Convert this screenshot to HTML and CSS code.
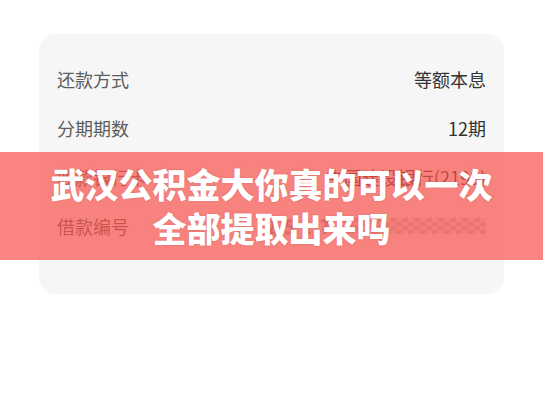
FILE: index.html
```html
<!DOCTYPE html>
<html lang="zh-CN">
<head>
    <meta charset="UTF-8">
    <meta name="viewport" content="width=device-width, initial-scale=1.0">
    <title>武汉公积金大你真的可以一次全部提取出来吗</title>
    <link rel="stylesheet" href="styles.css">
</head>
<body>
    <div class="page">
        <div class="card">
            <div class="row">
                <span class="label">还款方式</span>
                <span class="value">等额本息</span>
            </div>
            <div class="row">
                <span class="label">分期期数</span>
                <span class="value">12期</span>
            </div>
            <div class="row">
                <span class="label">收款银行卡</span>
                <span class="value">中国建设银行(2199)</span>
            </div>
            <div class="row">
                <span class="label">借款编号</span>
                <span class="value">
                    <span class="num">2 5 1 7</span><span class="mosaic"></span>
                </span>
            </div>
        </div>

        <div class="banner">
            <h1>武汉公积金大你真的可以一次<br>全部提取出来吗</h1>
        </div>
    </div>
</body>
</html>
```

FILE: styles.css
```css
body {
    margin: 0;
    background: #ffffff;
    font-family: "Noto Sans CJK SC", "Noto Sans", sans-serif;
}
.page {
    position: relative;
    width: 543px;
    height: 408px;
    padding-top: 34px;
    box-sizing: border-box;
}
.card {
    margin: 0 39px;
    padding: 20px 18px 44px;
    background: #f6f6f6;
    border-radius: 16px;
}
.row {
    display: flex;
    justify-content: space-between;
    align-items: center;
    height: 49px;
    font-size: 18px;
}
.label {
    color: #5c5c5c;
}
.value {
    color: #333333;
    display: flex;
    align-items: center;
}
.num {
    letter-spacing: 2px;
    filter: blur(1px);
}
.mosaic {
    display: inline-block;
    width: 150px;
    height: 16px;
    margin-left: 4px;
    background: repeating-conic-gradient(#c9c9c9 0 25%, #e6e6e6 0 50%) 0 0 / 12px 8px;
    filter: blur(0.6px);
}
/* salmon strip over the card */
.banner {
    position: absolute;
    left: 0;
    right: 0;
    top: 152px;
    height: 108px;
    display: flex;
    align-items: center;
    justify-content: center;
    background: rgba(249, 83, 76, 0.7);
}
.banner h1 {
    margin: 0;
    color: #ffffff;
    font-size: 34px;
    font-weight: 900;
    line-height: 44px;
    text-align: center;
    text-shadow: 0 0 2px rgba(120, 30, 30, 0.25);
}
```
